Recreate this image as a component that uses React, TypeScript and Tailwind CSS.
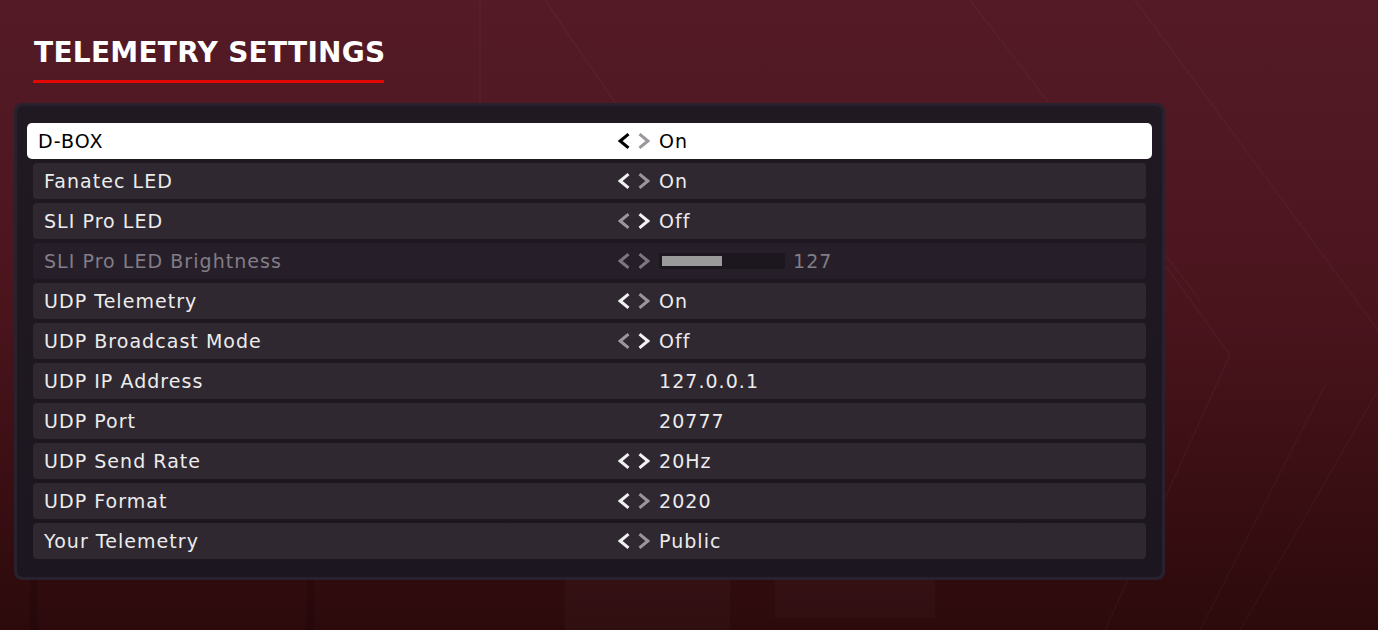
import React from 'react';

type Row = {
  label: string;
  value?: string;
  left?: 'on' | 'off';
  right?: 'on' | 'off';
  disabled?: boolean;
  bar?: number;
  selected?: boolean;
};

const rows: Row[] = [
  { label: 'D-BOX', value: 'On', left: 'on', right: 'off', selected: true },
  { label: 'Fanatec LED', value: 'On', left: 'on', right: 'off' },
  { label: 'SLI Pro LED', value: 'Off', left: 'off', right: 'on' },
  { label: 'SLI Pro LED Brightness', value: '127', left: 'off', right: 'off', disabled: true, bar: 60 },
  { label: 'UDP Telemetry', value: 'On', left: 'on', right: 'off' },
  { label: 'UDP Broadcast Mode', value: 'Off', left: 'off', right: 'on' },
  { label: 'UDP IP Address', value: '127.0.0.1' },
  { label: 'UDP Port', value: '20777' },
  { label: 'UDP Send Rate', value: '20Hz', left: 'on', right: 'on' },
  { label: 'UDP Format', value: '2020', left: 'on', right: 'off' },
  { label: 'Your Telemetry', value: 'Public', left: 'on', right: 'off' },
];

function Chevron({ dir, color }: { dir: 'left' | 'right'; color: string }) {
  return (
    <svg width="12" height="16" viewBox="0 0 12 16" className="block">
      <polyline
        points={dir === 'left' ? '10.5,1.2 2.2,8 10.5,14.8' : '1.5,1.2 9.8,8 1.5,14.8'}
        fill="none"
        stroke={color}
        strokeWidth="3"
        strokeLinecap="butt"
        strokeLinejoin="miter"
      />
    </svg>
  );
}

function SettingRow({ row }: { row: Row }) {
  const sel = row.selected;
  const activeColor = sel ? '#000000' : '#f2f2f2';
  const idle = '#9a969c';
  const leftColor = row.disabled ? '#7d7880' : row.left === 'on' ? activeColor : idle;
  const rightColor = row.disabled ? '#7d7880' : row.right === 'on' ? activeColor : idle;
  const textColor = sel ? 'text-black' : row.disabled ? 'text-[#827d86]' : 'text-[#ececec]';

  return (
    <div
      className={
        sel
          ? 'flex items-center h-[36px] -mx-[6px] pl-[11px] rounded-[5px] bg-white'
          : row.disabled
          ? 'flex items-center h-[36px] pl-[11px] rounded-[4px] bg-[#261f29]'
          : 'flex items-center h-[36px] pl-[11px] rounded-[4px] bg-[#2f2831]'
      }
    >
      <div className={`${sel ? 'w-[580px]' : 'w-[574px]'} ${textColor} shrink-0`}>{row.label}</div>
      <div className="flex items-center w-[41px] shrink-0">
        {row.left && (
          <>
            <Chevron dir="left" color={leftColor} />
            <div className="w-[8px]" />
            <Chevron dir="right" color={rightColor} />
          </>
        )}
      </div>
      {row.bar !== undefined ? (
        <div className="flex items-center">
          <div className="w-[126px] h-[16px] rounded-[2px] bg-[#1c171e] p-[3px]">
            <div className="h-full bg-[#9a9a9a]" style={{ width: `${row.bar}px` }} />
          </div>
          <span className={`ml-[8px] ${textColor}`}>{row.value}</span>
        </div>
      ) : (
        <div className={textColor}>{row.value}</div>
      )}
    </div>
  );
}

function Backdrop() {
  return (
    <svg className="absolute inset-0 w-full h-full" viewBox="0 0 1378 630" preserveAspectRatio="none">
      <g stroke="#ffffff" strokeOpacity="0.03" strokeWidth="1.5" fill="none">
        <line x1="1135" y1="0" x2="1378" y2="330" />
        <line x1="970" y1="0" x2="1200" y2="300" />
        <line x1="1165" y1="265" x2="1230" y2="355" />
        <line x1="1230" y1="355" x2="1105" y2="630" />
        <line x1="1378" y1="390" x2="1240" y2="630" />
        <line x1="1325" y1="385" x2="1200" y2="630" />
        <line x1="545" y1="0" x2="620" y2="110" />
        <line x1="480" y1="0" x2="480" y2="105" />
      </g>
      <g fill="#ffffff" fillOpacity="0.025">
        <rect x="565" y="580" width="165" height="50" />
        <rect x="775" y="580" width="160" height="38" />
      </g>
      <g stroke="#000000" strokeOpacity="0.12" strokeWidth="8">
        <line x1="34" y1="580" x2="34" y2="630" />
        <line x1="310" y1="580" x2="310" y2="630" />
      </g>
    </svg>
  );
}

export default function App() {
  return (
    <div
      className="relative w-[1378px] h-[630px] overflow-hidden bg-gradient-to-b from-[#541b27] via-[#4a141d] to-[#2c0a0c]"
      style={{ fontFamily: '"DejaVu Sans", "Liberation Sans", sans-serif' }}
    >
      <Backdrop />
      <div className="relative pt-[33px] pl-[33px]">
        <div className="inline-block">
          <h1 className="text-[28px] leading-[40px] font-bold text-white pl-[1px] tracking-[0.01em]">
            TELEMETRY SETTINGS
          </h1>
          <div className="mt-[7px] h-[3px] w-[351px] bg-[#e10600]" />
        </div>
      </div>
      <div className="relative ml-[14px] mt-[20px] w-[1151px] h-[477px] rounded-[8px] bg-[#29222e] p-[3px]">
        <div className="h-full rounded-[6px] bg-gradient-to-b from-[#211922] to-[#1b161f] pt-[17px] px-[16px] flex flex-col gap-[4px] text-[19px] tracking-[0.055em]">
          {rows.map((r) => (
            <SettingRow key={r.label} row={r} />
          ))}
        </div>
      </div>
    </div>
  );
}
